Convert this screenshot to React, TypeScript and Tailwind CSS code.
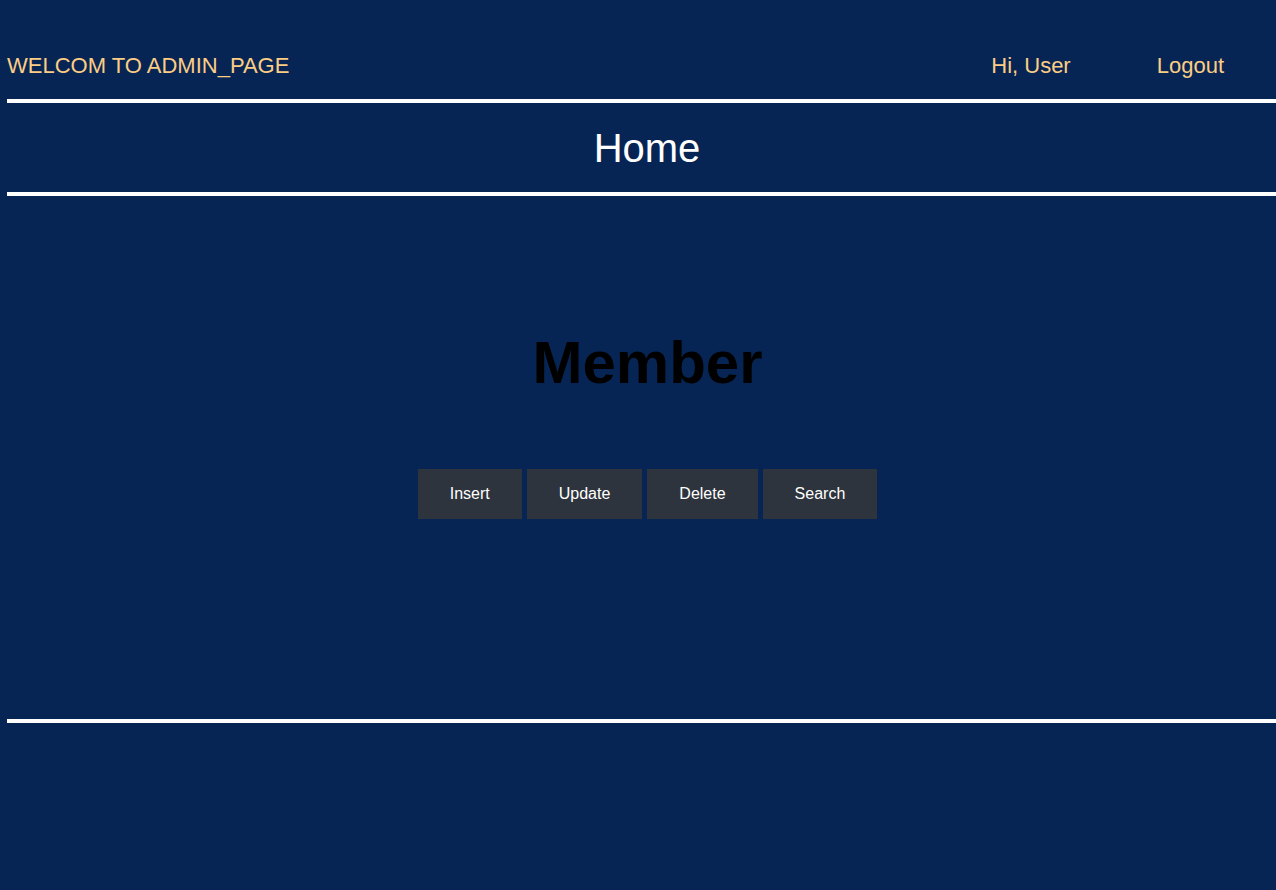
// ─── Admin home page ──────────────────────────────────────────────────────────

const ACTIONS = ['Insert', 'Update', 'Delete', 'Search']

function Rule() {
  return <div className="ml-[7px] h-[4px] bg-white" />
}

export default function App() {
  return (
    <div
      className="min-h-[890px] bg-[#072554]"
      style={{ fontFamily: '"Liberation Sans", Arial, sans-serif' }}
    >
      {/* ── Header ── */}
      <header className="flex items-center pl-[7px] pt-[53px] pb-[21px] text-[22px] leading-[25px] text-[#fbcd85]">
        <span>WELCOM TO ADMIN_PAGE</span>
        <span className="ml-auto">Hi, User</span>
        <span className="ml-[86px] mr-[52px]">Logout</span>
      </header>
      <Rule />

      {/* ── Title ── */}
      <div className="flex h-[89px] items-center justify-center pl-[18px]">
        <h2 className="text-[40px] leading-[46px] text-white">Home</h2>
      </div>
      <Rule />

      {/* ── Content ── */}
      <main className="flex h-[523px] flex-col items-center pl-[19px] pt-[132px]">
        <h1 className="text-[60px] font-bold leading-[69px] text-black">Member</h1>
        <div className="mt-[72px] flex gap-[5px]">
          {ACTIONS.map(label => (
            <button
              key={label}
              className="h-[50px] bg-[#2e343d] px-8 text-[16px] text-white"
            >
              {label}
            </button>
          ))}
        </div>
      </main>
      <Rule />
    </div>
  )
}
